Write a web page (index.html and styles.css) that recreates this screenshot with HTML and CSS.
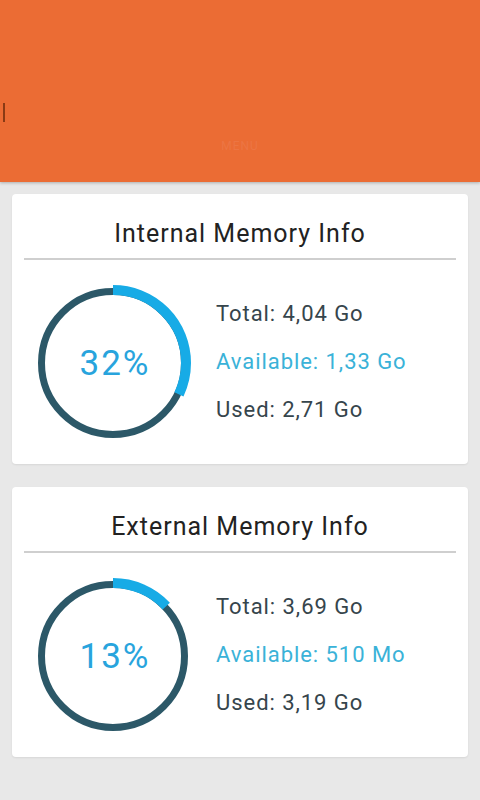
FILE: index.html
```html
<!DOCTYPE html>
<html>
<head>
<meta charset="utf-8">
<link rel="stylesheet" href="styles.css">
</head>
<body>
<header class="appbar">
  <span class="mark"></span>
  <span class="ghost">MENU</span>
</header>
<main class="content">
  <section class="card">
    <h2 class="card-title">Internal Memory Info</h2>
    <div class="divider"></div>
    <div class="card-body">
      <div class="ring">
        <svg class="ring-svg" width="160" height="160" viewBox="0 0 160 160">
          <circle cx="80" cy="80" r="71.5" fill="none" stroke="#2c5868" stroke-width="7"/>
          <circle cx="80" cy="80" r="73" fill="none" stroke="#17abe6" stroke-width="10" stroke-dasharray="146.8 400" transform="rotate(-90 80 80)"/>
        </svg>
        <span class="pct">32%</span>
      </div>
      <div class="stats">
        <div class="stat">Total: 4,04 Go</div>
        <div class="stat avail">Available: 1,33 Go</div>
        <div class="stat">Used: 2,71 Go</div>
      </div>
    </div>
  </section>
  <section class="card">
    <h2 class="card-title">External Memory Info</h2>
    <div class="divider"></div>
    <div class="card-body">
      <div class="ring">
        <svg class="ring-svg" width="160" height="160" viewBox="0 0 160 160">
          <circle cx="80" cy="80" r="71.5" fill="none" stroke="#2c5868" stroke-width="7"/>
          <circle cx="80" cy="80" r="73" fill="none" stroke="#17abe6" stroke-width="10" stroke-dasharray="59.6 400" transform="rotate(-90 80 80)"/>
        </svg>
        <span class="pct">13%</span>
      </div>
      <div class="stats">
        <div class="stat">Total: 3,69 Go</div>
        <div class="stat avail">Available: 510 Mo</div>
        <div class="stat">Used: 3,19 Go</div>
      </div>
    </div>
  </section>
</main>
</body>
</html>
```
FILE: styles.css
```css
html, body {
  margin: 0;
  padding: 0;
}
body {
  background: #e8e8e8;
  font-family: Roboto, "Liberation Sans", sans-serif;
  width: 480px;
  height: 800px;
  overflow: hidden;
}
.appbar {
  height: 182px;
  background: #eb6c34;
  box-shadow: 0 1px 3px rgba(0,0,0,0.25);
  display: flex;
  flex-direction: column;
  align-items: flex-start;
}
.mark {
  display: block;
  width: 2px;
  height: 19px;
  margin: 103px 0 0 3px;
  background: #8a3a14;
}
.ghost {
  align-self: center;
  margin-top: 17px;
  font-size: 12px;
  color: #ec7543;
  letter-spacing: 1px;
}
.content {
  display: flex;
  flex-direction: column;
  gap: 23px;
  padding: 12px 12px 0;
}
.card {
  background: #fff;
  border-radius: 4px;
  box-shadow: 0 1px 2px rgba(0,0,0,0.08);
  padding: 0 12px 21px;
}
.card-title {
  margin: 0;
  padding-top: 25px;
  font-size: 25px;
  line-height: 30px;
  font-weight: 400;
  letter-spacing: 1px;
  color: #222;
  text-align: center;
}
.divider {
  height: 2px;
  background: #cfcfcf;
  margin-top: 9px;
}
.card-body {
  display: flex;
  align-items: center;
  padding-top: 23px;
}
.ring {
  display: grid;
  width: 160px;
  height: 160px;
  margin-left: 9px;
  place-items: center;
}
.ring-svg, .pct {
  grid-area: 1 / 1;
}
.ring-svg {
  display: block;
}
.pct {
  font-size: 35px;
  letter-spacing: 2px;
  color: #28a4dd;
  margin-left: 4px;
}
.stats {
  display: flex;
  flex-direction: column;
  margin-left: 23px;
  margin-top: -3px;
}
.stat {
  font-size: 22px;
  line-height: 48px;
  letter-spacing: 0.95px;
  color: #36454c;
}
.stat.avail {
  color: #3ab2d8;
}
```
